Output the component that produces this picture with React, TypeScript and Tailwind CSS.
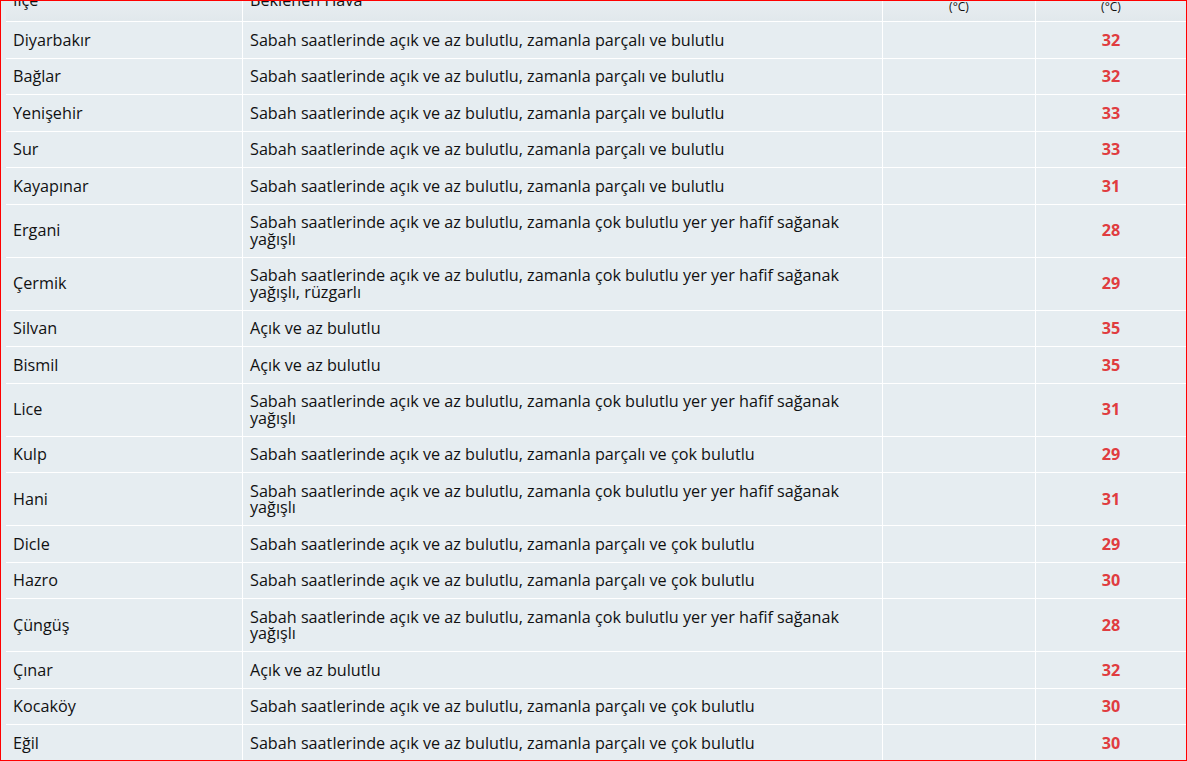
const rows: { ilce: string; hava: string; max: number }[] = [
  { ilce: 'Diyarbakır', hava: 'Sabah saatlerinde açık ve az bulutlu, zamanla parçalı ve bulutlu', max: 32 },
  { ilce: 'Bağlar', hava: 'Sabah saatlerinde açık ve az bulutlu, zamanla parçalı ve bulutlu', max: 32 },
  { ilce: 'Yenişehir', hava: 'Sabah saatlerinde açık ve az bulutlu, zamanla parçalı ve bulutlu', max: 33 },
  { ilce: 'Sur', hava: 'Sabah saatlerinde açık ve az bulutlu, zamanla parçalı ve bulutlu', max: 33 },
  { ilce: 'Kayapınar', hava: 'Sabah saatlerinde açık ve az bulutlu, zamanla parçalı ve bulutlu', max: 31 },
  { ilce: 'Ergani', hava: 'Sabah saatlerinde açık ve az bulutlu, zamanla çok bulutlu yer yer hafif sağanak yağışlı', max: 28 },
  { ilce: 'Çermik', hava: 'Sabah saatlerinde açık ve az bulutlu, zamanla çok bulutlu yer yer hafif sağanak yağışlı, rüzgarlı', max: 29 },
  { ilce: 'Silvan', hava: 'Açık ve az bulutlu', max: 35 },
  { ilce: 'Bismil', hava: 'Açık ve az bulutlu', max: 35 },
  { ilce: 'Lice', hava: 'Sabah saatlerinde açık ve az bulutlu, zamanla çok bulutlu yer yer hafif sağanak yağışlı', max: 31 },
  { ilce: 'Kulp', hava: 'Sabah saatlerinde açık ve az bulutlu, zamanla parçalı ve çok bulutlu', max: 29 },
  { ilce: 'Hani', hava: 'Sabah saatlerinde açık ve az bulutlu, zamanla çok bulutlu yer yer hafif sağanak yağışlı', max: 31 },
  { ilce: 'Dicle', hava: 'Sabah saatlerinde açık ve az bulutlu, zamanla parçalı ve çok bulutlu', max: 29 },
  { ilce: 'Hazro', hava: 'Sabah saatlerinde açık ve az bulutlu, zamanla parçalı ve çok bulutlu', max: 30 },
  { ilce: 'Çüngüş', hava: 'Sabah saatlerinde açık ve az bulutlu, zamanla çok bulutlu yer yer hafif sağanak yağışlı', max: 28 },
  { ilce: 'Çınar', hava: 'Açık ve az bulutlu', max: 32 },
  { ilce: 'Kocaköy', hava: 'Sabah saatlerinde açık ve az bulutlu, zamanla parçalı ve çok bulutlu', max: 30 },
  { ilce: 'Eğil', hava: 'Sabah saatlerinde açık ve az bulutlu, zamanla parçalı ve çok bulutlu', max: 30 },
];

const head = 'flex items-center bg-gradient-to-b from-[#f0f3f6] to-[#e1e8ec] px-[7px] py-[8px]';
const cell = 'flex items-center bg-[#e6edf1] px-[7px] py-[9.5px]';

export default function App() {
  return (
    <div className="h-[761px] w-[1187px] overflow-hidden border border-[#ff0000] bg-[#e6edf1] pl-[5px] font-['Open_Sans',sans-serif] text-[16.2px] leading-[16.5px] text-[#111]">
      <div className="-mt-[22px] grid grid-cols-[236px_639px_152px_150px] gap-px bg-white">
        <div className={head}>İlçe</div>
        <div className={head}>Beklenen Hava</div>
        <div className={`${head} justify-center text-center text-[12px] leading-[13px]`}>
          En Düşük
          <br />
          (°C)
        </div>
        <div className={`${head} justify-center text-center text-[12px] leading-[13px]`}>
          En Yüksek
          <br />
          (°C)
        </div>

        {rows.map((r) => (
          <div key={r.ilce} className="contents">
            <div className={cell}>{r.ilce}</div>
            <div className={cell}>{r.hava}</div>
            <div className={cell}></div>
            <div className={`${cell} justify-center font-bold text-[#e03c40]`}>{r.max}</div>
          </div>
        ))}
      </div>
    </div>
  );
}
